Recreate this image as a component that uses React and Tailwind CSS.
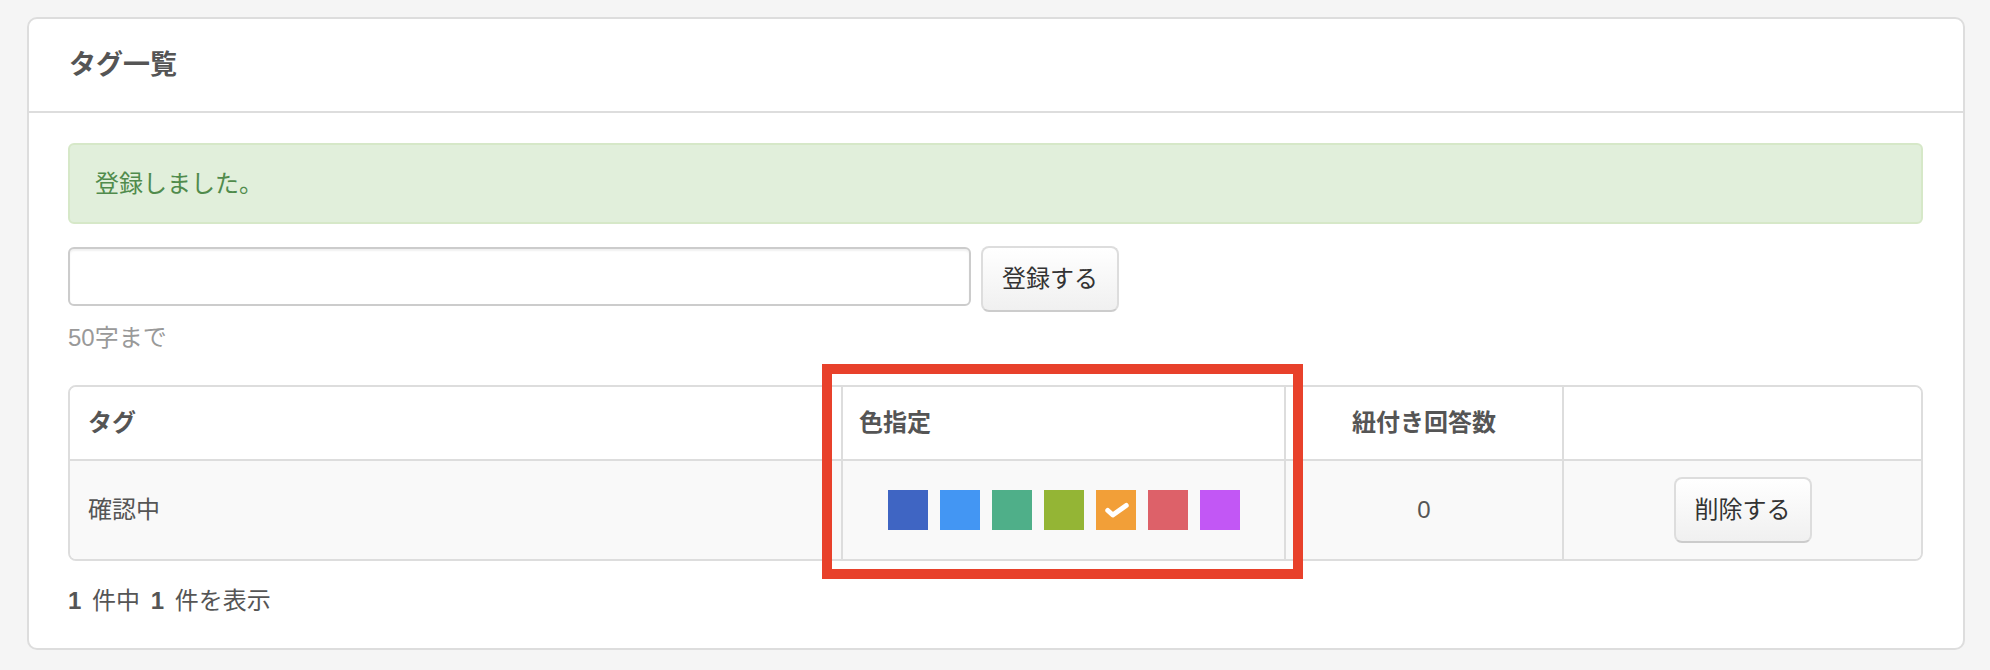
import React, { useState } from 'react';

const COLORS = ['#3f65c3', '#4396f3', '#4faf89', '#94b535', '#f29f38', '#dd6169', '#c257f5'];

const font = { fontFamily: '"Liberation Sans", "Noto Sans CJK JP", sans-serif' };

function Swatch({ color, checked, onClick }) {
  return (
    <button
      type="button"
      onClick={onClick}
      className="w-[40px] h-[40px] flex items-center justify-center"
      style={{ backgroundColor: color }}
    >
      {checked && (
        <svg width="40" height="40" viewBox="0 0 40 40">
          <polyline
            points="11.8,20.5 16.8,25 30.2,15.5"
            fill="none"
            stroke="#ffffff"
            strokeWidth="5"
            strokeLinecap="round"
            strokeLinejoin="round"
          />
        </svg>
      )}
    </button>
  );
}

export default function App() {
  const [selected, setSelected] = useState(4);
  const [name, setName] = useState('');

  return (
    <div
      className="min-h-[670px] bg-[#f5f5f5] pl-[27px] pr-[25px] pt-[17px] text-[24px] text-[#555555]"
      style={font}
    >
      <div className="bg-white border-2 border-[#dddddd] rounded-[10px]">
        {/* header */}
        <div className="h-[94px] flex items-center pl-[40px] border-b-2 border-[#dddddd]">
          <h2 className="text-[27px] font-bold leading-none text-[#555555]">タグ一覧</h2>
        </div>

        <div className="pl-[39px] pr-[40px] pt-[30px] pb-[30px]">
          {/* flash */}
          <div className="h-[81px] flex items-center pl-[25px] bg-[#e1efdb] border-2 border-[#d6e8c8] rounded-[6px] text-[#508b4c] leading-[34px]">
            登録しました。
          </div>

          {/* form */}
          <div className="mt-[22px] flex items-start gap-[10px]">
            <input
              value={name}
              onChange={(e) => setName(e.target.value)}
              className="mt-[1px] w-[903px] h-[59px] border-2 border-[#cccccc] rounded-[6px] px-[14px] text-[24px] text-[#555555] outline-none shadow-[inset_0_2px_2px_rgba(0,0,0,0.06)]"
            />
            <button
              type="button"
              className="w-[138px] h-[66px] rounded-[8px] border-2 border-[#dddddd] border-b-[#cccccc] bg-gradient-to-b from-white to-[#f0f0f0] text-[#333333] text-[24px] leading-none"
            >
              登録する
            </button>
          </div>
          <p className="mt-[9px] leading-[34px] text-[#999999]">50字まで</p>

          {/* table */}
          <div className="relative mt-[30px]">
            <div className="border-2 border-[#dddddd] rounded-[8px] overflow-hidden">
              <div className="grid grid-cols-[771px_443px_278px_359px] bg-white border-b-2 border-[#dddddd] h-[74px] font-bold">
                <div className="flex items-center pl-[18px]">タグ</div>
                <div className="flex items-center pl-[16px] border-l-2 border-[#dddddd]">色指定</div>
                <div className="flex items-center justify-center border-l-2 border-[#dddddd]">紐付き回答数</div>
                <div className="border-l-2 border-[#dddddd]" />
              </div>
              <div className="grid grid-cols-[771px_443px_278px_359px] bg-[#f9f9f9] h-[98px]">
                <div className="flex items-center pl-[18px]">確認中</div>
                <div className="flex items-center justify-center gap-[12px] border-l-2 border-[#dddddd]">
                  {COLORS.map((c, i) => (
                    <Swatch key={c} color={c} checked={selected === i} onClick={() => setSelected(i)} />
                  ))}
                </div>
                <div className="flex items-center justify-center border-l-2 border-[#dddddd]">0</div>
                <div className="flex items-center justify-center border-l-2 border-[#dddddd]">
                  <button
                    type="button"
                    className="w-[138px] h-[66px] rounded-[8px] border-2 border-[#dddddd] border-b-[#cccccc] bg-gradient-to-b from-white to-[#f0f0f0] text-[#333333] text-[24px] leading-none"
                  >
                    削除する
                  </button>
                </div>
              </div>
            </div>
            {/* highlight annotation */}
            <div className="absolute left-[754px] -top-[21px] w-[481px] h-[215px] border-[10px] border-[#e8412b] pointer-events-none" />
          </div>

          {/* count */}
          <p className="mt-[23px] leading-[34px]">
            <span className="font-bold mr-[4px]">1</span> 件中 <span className="font-bold mx-[4px]">1</span> 件を表示
          </p>
        </div>
      </div>
    </div>
  );
}
